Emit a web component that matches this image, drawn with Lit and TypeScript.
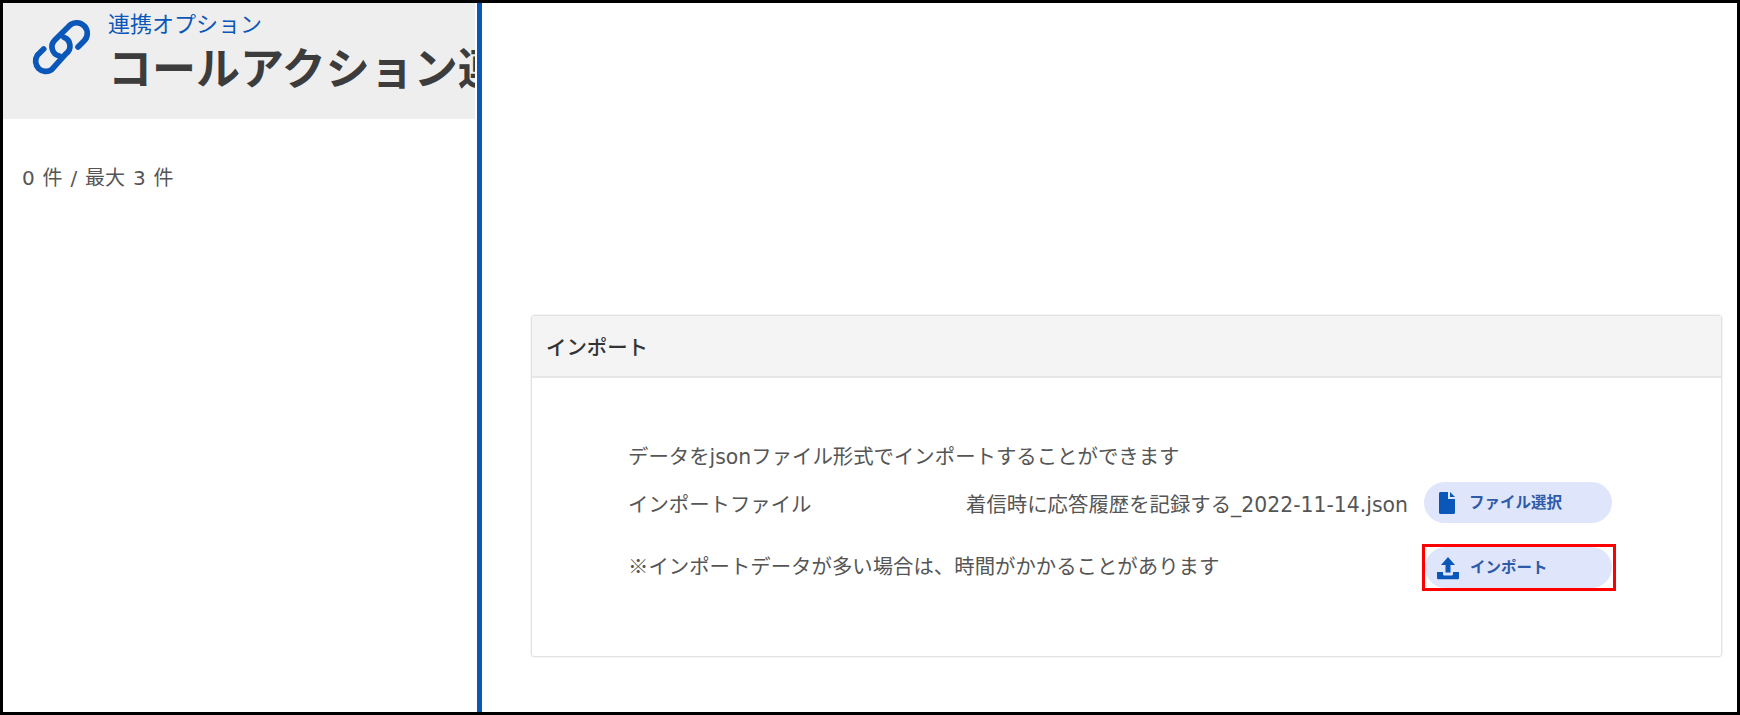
import { LitElement, html, css, svg } from "lit";
import { customElement } from "lit/decorators.js";

const linkIcon = svg`<svg class="link" viewBox="90 50 180 180" width="60" height="60" fill="none" stroke="#0b57b9" stroke-width="17" stroke-linecap="round" stroke-linejoin="round">
  <path d="M228 137 L246 119 A31 31 0 0 0 202 73 L158 117 A28 28 0 0 0 172 164"/>
  <path d="M186 108 A28 28 0 0 1 192 157 L149 205 A31 31 0 0 1 106 162 L125 143"/>
</svg>`;

const fileIcon = svg`<svg class="ico" viewBox="0 0 24 24" width="24" height="24" fill="#0b57b9">
  <path d="M4 2.500C4 1.600 4.600 1 5.500 1H13v7h7v13.500c0 .9-.6 1.500-1.500 1.500h-13C4.600 23 4 22.400 4 21.500z"/>
  <path d="M15 1l5 5h-5z"/>
</svg>`;

const uploadIcon = svg`<svg class="ico" viewBox="0 0 24 24" width="24" height="24" fill="#0b57b9">
  <path d="M12 1L5 9h4.500v7.500h5V9H19z"/>
  <path d="M1 16h6v2c0 1 .8 1.500 1.500 1.500h7c.7 0 1.500-.5 1.500-1.500v-2h6v6c0 .8-.6 1.300-1.300 1.300H2.300C1.600 23.300 1 22.800 1 22z"/>
</svg>`;

@customElement("app-root")
export class AppRoot extends LitElement {
  static styles = css`
    :host {
      display: grid;
      grid-template-columns: 479px 1fr;
      box-sizing: border-box;
      height: 715px;
      border: 3px solid #000;
      background: #fff;
      font-family: "DejaVu Sans", "Noto Sans CJK JP", sans-serif;
      color: #555;
      overflow: hidden;
    }
    .side {
      border-right: 5px solid #0b57b9;
      overflow: hidden;
      min-width: 0;
    }
    .head {
      display: flex;
      align-items: flex-start;
      gap: 16px;
      height: 116px;
      background: #eee;
      padding-left: 29px;
      margin-right: 2px;
      white-space: nowrap;
      overflow: hidden;
    }
    .link { flex: none; margin-top: 15px; }
    .crumb {
      font-size: 22px;
      line-height: 30px;
      color: #0b57b9;
      margin-top: 7px;
    }
    h1 {
      margin: 2px 0 0;
      font-size: 44px;
      line-height: 56px;
      font-weight: 700;
      color: #3c3c3c;
    }
    .count {
      margin: 44px 0 0 19px;
      font-size: 20px;
      line-height: 30px;
      word-spacing: 1.500px;
      color: #555;
    }
    .main { padding: 312px 15px 0 49px; }
    .card {
      border: 1px solid #e2e2e2;
      box-shadow: 0 0 0 .5px #ececec;
      border-radius: 3px;
    }
    .card-head {
      height: 60px;
      background: #f4f4f4;
      border-bottom: 2px solid #e6e6e6;
      display: flex;
      align-items: center;
      padding-left: 14px;
      font-size: 20.400px;
      font-weight: 500;
      color: #333;
    }
    .card-body {
      padding: 63px 109px 68px 96px;
      font-size: 20.400px;
      color: #555;
    }
    .line { line-height: 32px; }
    .row {
      display: flex;
      align-items: center;
      height: 41px;
      line-height: 30px;
      margin-top: 9px;
    }
    .row.last { margin-top: 24px; }
    .up { margin-top: -4px; }
    .down { margin-top: 4px; }
    .file { margin-left: auto; margin-right: 16px; }
    .cjk { font-family: "Noto Sans CJK JP", sans-serif; }
    .push { margin-left: auto; margin-right: -1px; }
    button {
      display: flex;
      align-items: center;
      gap: 10px;
      width: 188px;
      height: 41px;
      padding: 0 0 3px 11px;
      border: none;
      border-radius: 21px;
      background: #dfe6fb;
      color: #2f5aa8;
      font: 700 15.5px "Noto Sans CJK JP", sans-serif;
    }
    .frame button { width: 187px; }
    .ico { flex: none; margin-top: 3px; }
    .frame { display: flex; padding-right: 1px; outline: 3px solid #f00; }
  `;

  render() {
    return html`
      <div class="side">
        <div class="head">
          ${linkIcon}
          <div>
            <div class="crumb">連携オプション</div>
            <h1>コールアクション連携</h1>
          </div>
        </div>
        <div class="count">0 件 / 最大 3 件</div>
      </div>
      <div class="main">
        <section class="card">
          <div class="card-head">インポート</div>
          <div class="card-body">
            <div class="line">データをjsonファイル形式でインポートすることができます</div>
            <div class="row">
              <span class="down">インポートファイル</span>
              <span class="file down">着信時に応答履歴を記録する_2022-11-14.json</span>
              <button>${fileIcon}ファイル選択</button>
            </div>
            <div class="row last">
              <span class="up"><span class="cjk">※</span>インポートデータが多い場合は、時間がかかることがあります</span>
              <span class="frame push"><button>${uploadIcon}インポート</button></span>
            </div>
          </div>
        </section>
      </div>
    `;
  }
}
